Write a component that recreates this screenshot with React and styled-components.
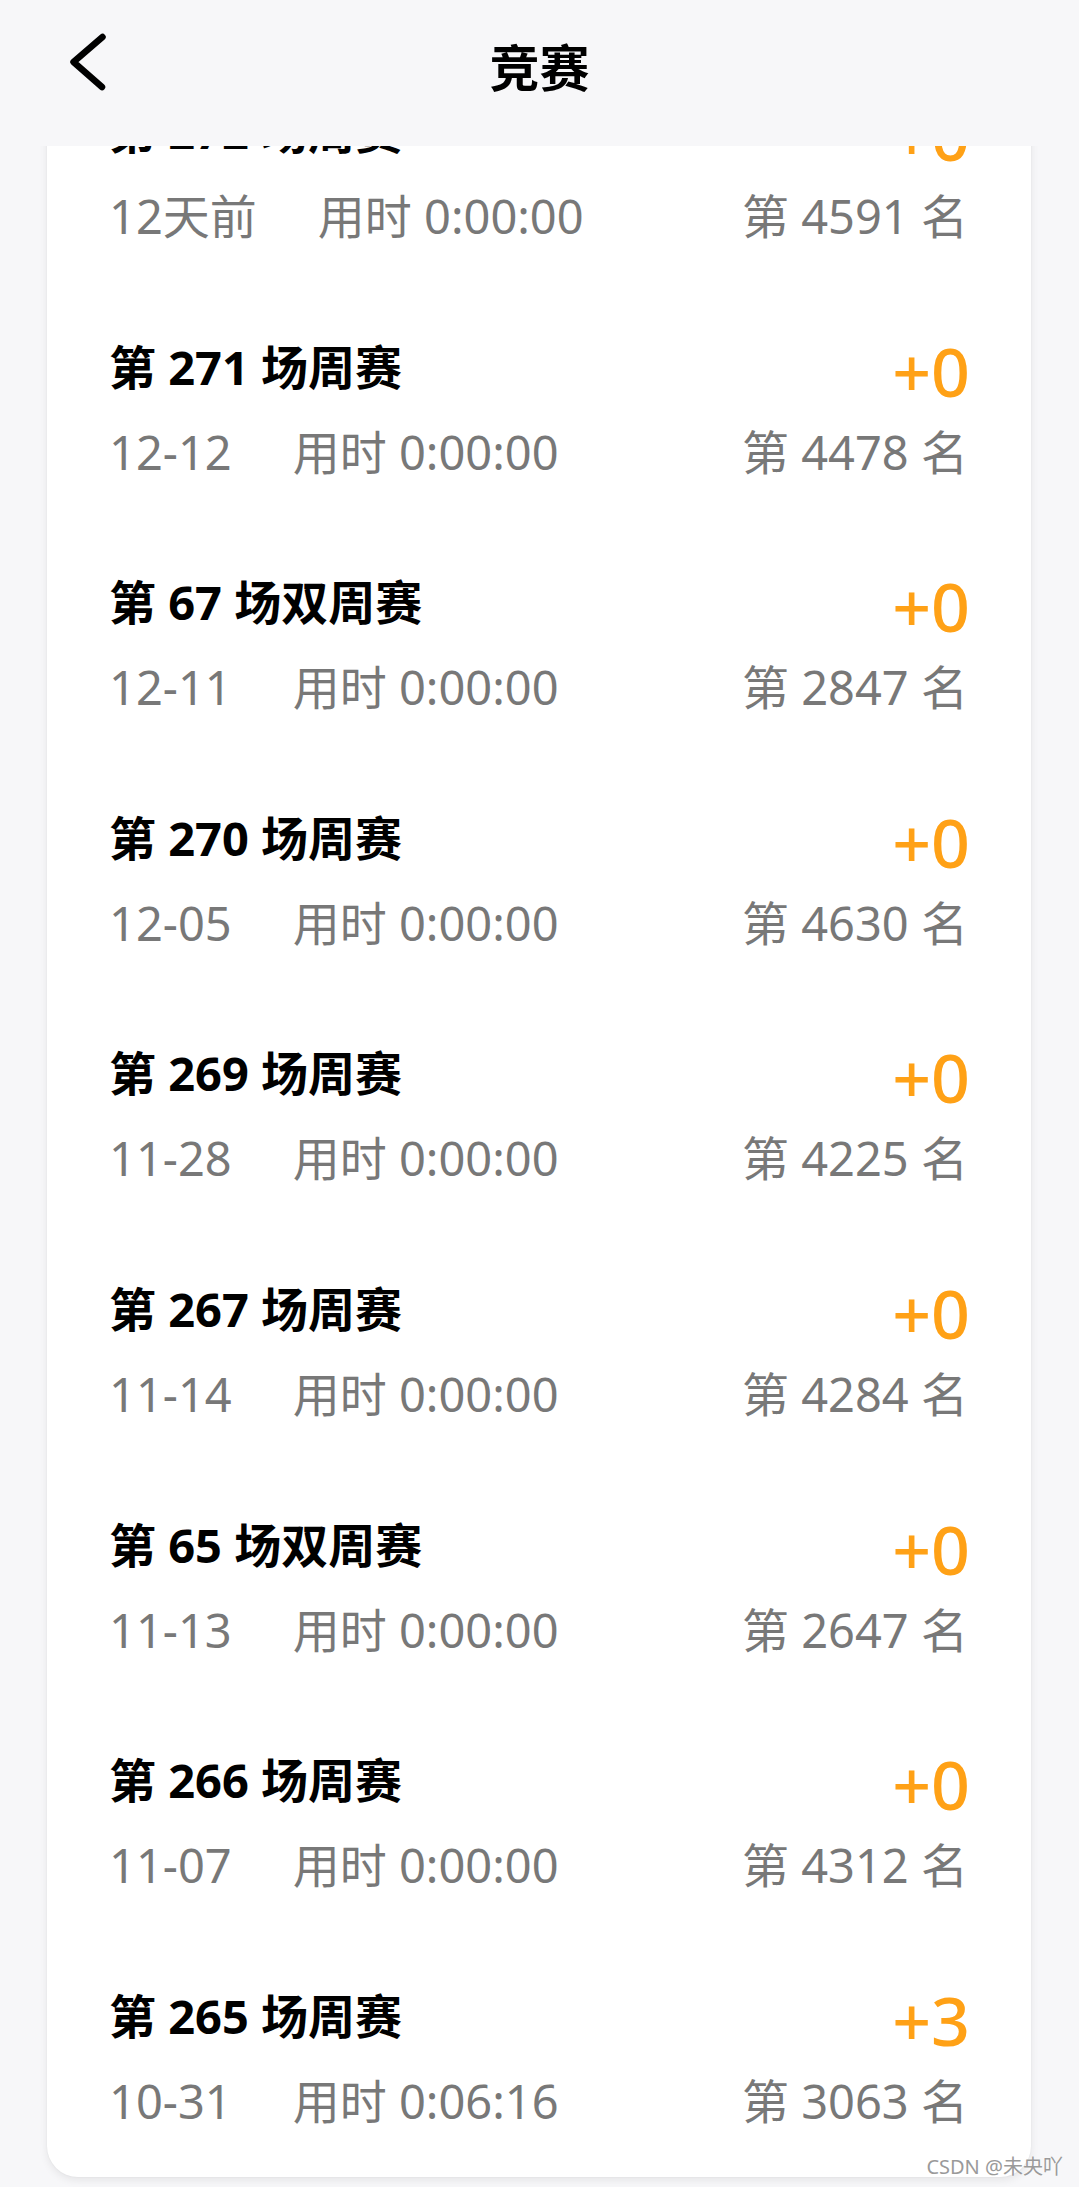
import React from "react";
import styled, { createGlobalStyle } from "styled-components";

const GlobalStyle = createGlobalStyle`
  html, body {
    margin: 0;
    padding: 0;
    background: #f7f7f9;
  }
  body {
    font-family: "Noto Sans", "Noto Sans CJK SC", sans-serif;
  }
  * { box-sizing: border-box; }
`;

const Page = styled.div`
  position: relative;
  width: 1079px;
  height: 2187px;
  display: flex;
  flex-direction: column;
  overflow: hidden;
  background: #f7f7f9;
`;

const Header = styled.header`
  position: relative;
  z-index: 2;
  flex: 0 0 146px;
  display: grid;
  grid-template-columns: 1fr auto 1fr;
  align-items: center;
  padding: 0 66px 16px 66px;
  background: #f7f7f9;
`;

const BackButton = styled.button`
  justify-self: start;
  display: flex;
  padding: 0;
  border: 0;
  background: none;
  cursor: pointer;
`;

const Title = styled.h1`
  margin: 0;
  font-family: "Noto Sans CJK SC", sans-serif;
  font-size: 50px;
  font-weight: 700;
  line-height: 64px;
  color: #000;
`;

const Viewport = styled.main`
  position: relative;
  z-index: 1;
  flex: 1 1 auto;
  overflow: hidden;
`;

const Card = styled.ul`
  list-style: none;
  margin: ${(p) => -p.$scroll}px 48px 0 47px;
  padding: 0;
  background: #fff;
  border-radius: 31px;
  box-shadow: 0 3px 8px rgba(0, 0, 0, 0.08), 0 0 2px rgba(0, 0, 0, 0.06);
`;

const Row = styled.li`
  display: flex;
  flex-direction: column;
  height: 235.6px;
  padding: 44.6px 61px 0 62px;
`;

const TopLine = styled.div`
  display: flex;
  align-items: flex-start;
  justify-content: space-between;
  height: 60px;
`;

const ContestName = styled.span`
  font-family: "Noto Sans", "Noto Sans CJK SC", sans-serif;
  font-size: 47px;
  font-weight: 700;
  line-height: 60px;
  color: #000;
`;

const Score = styled.span`
  margin-top: 4px;
  font-family: "Noto Sans", sans-serif;
  font-size: 68px;
  font-weight: 500;
  line-height: 60px;
  color: #ffa116;
`;

const MetaLine = styled.div`
  display: flex;
  align-items: center;
  margin-top: 25px;
  padding-right: 2px;
  height: 60px;
  font-family: "Noto Sans", "Noto Sans CJK SC", sans-serif;
  font-size: 47px;
  line-height: 60px;
  color: #787878;
`;

const Time = styled.span`
  margin-left: 61px;
`;

const Rank = styled.span`
  margin-left: auto;
`;

const Watermark = styled.div`
  position: absolute;
  right: 16px;
  bottom: 8px;
  z-index: 3;
  font-family: "Noto Sans", "Noto Sans CJK SC", sans-serif;
  font-size: 20px;
  line-height: 24px;
  color: #9a9a9a;
  text-shadow: 0 0 2px #fff;
`;

const contests = [
  { name: "第 272 场周赛", score: "+0", date: "12天前", time: "0:00:00", rank: 4591 },
  { name: "第 271 场周赛", score: "+0", date: "12-12", time: "0:00:00", rank: 4478 },
  { name: "第 67 场双周赛", score: "+0", date: "12-11", time: "0:00:00", rank: 2847 },
  { name: "第 270 场周赛", score: "+0", date: "12-05", time: "0:00:00", rank: 4630 },
  { name: "第 269 场周赛", score: "+0", date: "11-28", time: "0:00:00", rank: 4225 },
  { name: "第 267 场周赛", score: "+0", date: "11-14", time: "0:00:00", rank: 4284 },
  { name: "第 65 场双周赛", score: "+0", date: "11-13", time: "0:00:00", rank: 2647 },
  { name: "第 266 场周赛", score: "+0", date: "11-07", time: "0:00:00", rank: 4312 },
  { name: "第 265 场周赛", score: "+3", date: "10-31", time: "0:06:16", rank: 3063 },
];

export default function App() {
  return (
    <>
      <GlobalStyle />
      <Page>
        <Header>
          <BackButton aria-label="返回">
            <svg width="44" height="64" viewBox="0 0 44 64" fill="none">
              <polyline
                points="36.5,4 7.5,29 36,54"
                stroke="#000"
                strokeWidth="6.5"
                strokeLinecap="round"
                strokeLinejoin="round"
              />
            </svg>
          </BackButton>
          <Title>竞赛</Title>
        </Header>
        <Viewport>
          <Card $scroll={89.6}>
            {contests.map((c) => (
              <Row key={c.name}>
                <TopLine>
                  <ContestName>{c.name}</ContestName>
                  <Score>{c.score}</Score>
                </TopLine>
                <MetaLine>
                  <span>{c.date}</span>
                  <Time>用时 {c.time}</Time>
                  <Rank>第 {c.rank} 名</Rank>
                </MetaLine>
              </Row>
            ))}
          </Card>
        </Viewport>
        <Watermark>CSDN @未央吖</Watermark>
      </Page>
    </>
  );
}
